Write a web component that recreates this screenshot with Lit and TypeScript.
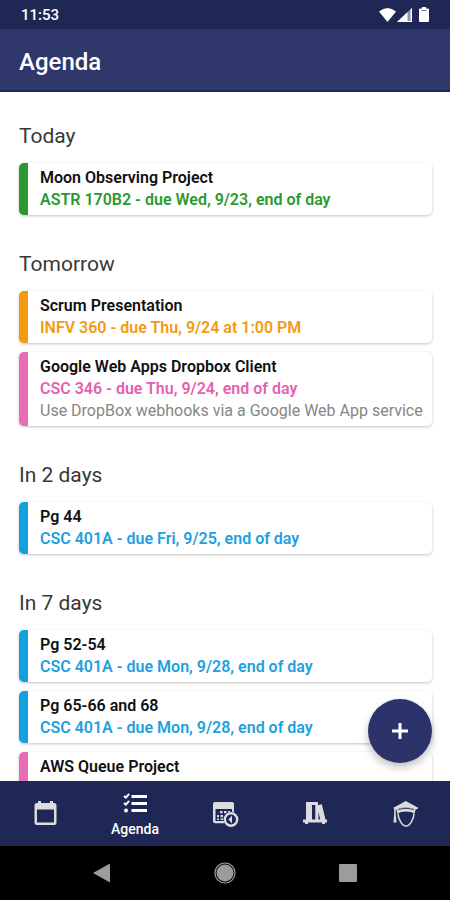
import { LitElement, html, css, svg, nothing } from "lit";
import { customElement, property, state } from "lit/decorators.js";
import { classMap } from "lit/directives/class-map.js";

interface Task {
  title: string;
  due?: string;
  note?: string;
  color: "green" | "orange" | "pink" | "blue";
}

interface Day {
  label: string;
  tasks: Task[];
}

const days: Day[] = [
  {
    label: "Today",
    tasks: [{ title: "Moon Observing Project", due: "ASTR 170B2 - due Wed, 9/23, end of day", color: "green" }],
  },
  {
    label: "Tomorrow",
    tasks: [
      { title: "Scrum Presentation", due: "INFV 360 - due Thu, 9/24 at 1:00 PM", color: "orange" },
      {
        title: "Google Web Apps Dropbox Client",
        due: "CSC 346 - due Thu, 9/24, end of day",
        note: "Use DropBox webhooks via a Google Web App service",
        color: "pink",
      },
    ],
  },
  {
    label: "In 2 days",
    tasks: [{ title: "Pg 44", due: "CSC 401A - due Fri, 9/25, end of day", color: "blue" }],
  },
  {
    label: "In 7 days",
    tasks: [
      { title: "Pg 52-54", due: "CSC 401A - due Mon, 9/28, end of day", color: "blue" },
      { title: "Pg 65-66 and 68", due: "CSC 401A - due Mon, 9/28, end of day", color: "blue" },
      { title: "AWS Queue Project", color: "pink" },
    ],
  },
];

const calendarIcon = svg`
  <path fill-rule="evenodd" d="M5 0h3v2h9V0h3v2h1a2.500 2.500 0 0 1 2.500 2.500v17A2.500 2.500 0 0 1 21 24H4a2.500 2.500 0 0 1-2.500-2.500v-17A2.500 2.500 0 0 1 4 2h1zM4 8.500v13h17v-13z"/>`;

const agendaIcon = svg`
  <path d="M8.500 4h15.500v3H8.500zM8.500 11h15.500v3H8.500zM8.500 18h15.500v3H8.500z"/>
  <circle cx="3" cy="19.500" r="2"/>
  <path d="M1 5l1.800 1.600L6.200 2.800M1 12l1.800 1.600L6.200 9.800" fill="none" stroke="currentColor" stroke-width="2"/>`;

const scheduleIcon = svg`
  <path fill-rule="evenodd" d="M2 1h17a2 2 0 0 1 2 2v8.200a7.500 7.500 0 0 0-2-.5V8H2.500v12h8.200c.2.900.6 1.600 1 2.300H2a2 2 0 0 1-2-2V3a2 2 0 0 1 2-2z"/>
  <path d="M7 10h2.500v2.300H7zM11 10h2.500v2.300H11zM15 10h2v1l-2 .600zM4 14h2v2.300H4zM7.500 14H10v2.300H7.500zM4 17.600h2v1.500H4zM7.500 17.600H10v1.500H7.500z"/>
  <circle cx="18" cy="18.500" r="6.200" fill="none" stroke="currentColor" stroke-width="2.400"/>
  <path d="M19 14.500v8l-3.500-4z"/>`;

const coursesIcon = svg`
  <path fill-rule="evenodd" d="M3 1h12v3l3.800-.800L22.500 18.500H24v3h-2V23h-3v-1.500H5V23H2v-1.500H0v-3h3zM9 4v14.500h3.300V4zM15.400 11v7.500h1.800z"/>`;

const studentIcon = svg`
  <path d="M12.800 0L25.500 7l-3 2C17.500 5.800 8.500 5.800 3.500 9L0 7z"/>
  <path d="M3.500 9C8.500 5.800 17.500 5.800 22.500 9l-1 3.800C17.500 9.800 8.500 9.800 4.500 12.800z"/>
  <path d="M5.500 8.600C9.500 7 16 7 20.500 8.600" fill="none" stroke="#1f2755" stroke-width=".9"/>
  <path d="M5 12.500c0 5.500 4.300 12.500 8 12.500s8-7 8-12.500" fill="none" stroke="currentColor" stroke-width="1.500"/>
  <path d="M1.200 7.500h1.600V14l.8 7.500H.4L1.200 14z"/>`;

const tabs = [
  { name: "Calendar", icon: calendarIcon },
  { name: "Agenda", icon: agendaIcon },
  { name: "Schedule", icon: scheduleIcon },
  { name: "Courses", icon: coursesIcon },
  { name: "Student", icon: studentIcon },
];

@customElement("task-card")
class TaskCard extends LitElement {
  @property({ attribute: false }) task!: Task;

  static styles = css`
    :host {
      display: block;
    }
    .card {
      box-sizing: border-box;
      min-height: 52px;
      padding: 4px 4px 4px 12px;
      border-left: 9px solid;
      border-radius: 5px;
      background: #fff;
      box-shadow: 0 1px 3px rgba(0, 0, 0, 0.24);
      font-size: 16px;
      line-height: 22px;
    }
    .title,
    .due,
    .note {
      margin: 0;
      white-space: nowrap;
      overflow: hidden;
    }
    .title {
      color: #111;
      font-size: 16px;
      font-weight: 600;
    }
    .due {
      font-weight: 600;
    }
    .note {
      color: #868686;
    }
    .green { border-color: #2a9a2f; }
    .green .due { color: #2a9a2f; }
    .orange { border-color: #f39a12; }
    .orange .due { color: #f39a12; }
    .pink { border-color: #e86db5; }
    .pink .due { color: #e75fb0; }
    .blue { border-color: #149fdf; }
    .blue .due { color: #1f9fe0; }
  `;

  render() {
    const { title, due, note, color } = this.task;
    return html`
      <article class="card ${color}">
        <h3 class="title">${title}</h3>
        ${due ? html`<p class="due">${due}</p>` : nothing}
        ${note ? html`<p class="note">${note}</p>` : nothing}
      </article>
    `;
  }
}

@customElement("app-root")
class AppRoot extends LitElement {
  @state() private active = "Agenda";

  static styles = css`
    :host {
      display: flex;
      flex-direction: column;
      height: 100vh;
      overflow: hidden;
      background: #fff;
      font-family: Roboto, "Liberation Sans", sans-serif;
    }
    .status {
      display: flex;
      flex: none;
      align-items: center;
      justify-content: space-between;
      height: 29px;
      padding: 0 19px 0 21px;
      background: #1f2755;
      color: #fff;
      font-size: 15px;
      font-weight: 500;
    }
    .signals {
      display: block;
      width: 52px;
      height: 16px;
      fill: #fff;
    }
    .bar {
      display: flex;
      flex: none;
      align-items: center;
      box-sizing: border-box;
      height: 63px;
      padding: 4px 19px 0;
      background: #30376b;
      border-bottom: 2px solid #1c2a5e;
      color: #fff;
    }
    .bar-title {
      margin: 0;
      font-size: 24px;
      font-weight: 500;
      line-height: 32px;
    }
    .body {
      position: relative;
      display: flex;
      flex: 1;
      min-height: 0;
    }
    .list {
      flex: 1;
      min-width: 0;
      overflow-y: auto;
      scrollbar-width: none;
      padding: 31px 18px 18px 19px;
    }
    .day + .day {
      margin-top: 36px;
    }
    .day-label {
      margin: 0 0 14px;
      color: #383838;
      font-size: 21px;
      font-weight: 400;
      line-height: 26px;
    }
    .tasks {
      display: flex;
      flex-direction: column;
      gap: 9px;
      margin: 0;
      padding: 0;
      list-style: none;
    }
    .add {
      position: absolute;
      right: 18px;
      bottom: 18px;
      display: grid;
      place-items: center;
      width: 64px;
      height: 64px;
      padding: 0;
      border: 0;
      border-radius: 50%;
      background: #2c336b;
      color: #fff;
      box-shadow: 0 4px 8px rgba(0, 0, 0, 0.26);
    }
    .plus {
      width: 16px;
      height: 16px;
      fill: currentColor;
    }
    .tabs {
      display: flex;
      flex: none;
      height: 65px;
      background: #1f2755;
    }
    .tab {
      display: flex;
      flex: 1;
      flex-direction: column;
      align-items: center;
      justify-content: center;
      gap: 4px;
      padding: 0;
      border: 0;
      background: none;
      color: #dcdce0;
      font: 500 14px/18px Roboto, "Liberation Sans", sans-serif;
    }
    .active {
      padding-top: 2px;
      color: #fff;
    }
    .icon {
      display: block;
      width: 25px;
      height: 25px;
      fill: currentColor;
      overflow: visible;
    }
    .system {
      display: flex;
      flex: none;
      align-items: center;
      justify-content: center;
      gap: 99px;
      height: 54px;
      background: #000;
    }
    .key {
      padding: 0;
      border: 0;
      background: none;
    }
    .glyph {
      display: block;
      width: 24px;
      height: 24px;
      fill: #9c9c9c;
    }
  `;

  render() {
    return html`
      <div class="status">
        <time>11:53</time>
        <svg class="signals" viewBox="0 0 52 16" aria-hidden="true">
          <path d="M0 4.500Q8.500-2.500 17 4.500L8.500 15z" />
          <path d="M18 15L33 1v14z" opacity=".5" />
          <path d="M18 15L28.500 5v10zM31.500 2.400L33 1v14h-1.500zM28 14h5v1h-5z" />
          <path d="M41 1.500h2V0h4v1.500h2a1 1 0 0 1 1 1V14a1 1 0 0 1-1 1h-8a1 1 0 0 1-1-1V2.500a1 1 0 0 1 1-1z" />
          <path d="M42.500 3.500h5" stroke="#1f2755" stroke-width=".6" />
        </svg>
      </div>
      <header class="bar"><h1 class="bar-title">Agenda</h1></header>
      <div class="body">
        <main class="list">
          ${days.map(
            (day) => html`
              <section class="day">
                <h2 class="day-label">${day.label}</h2>
                <ul class="tasks">
                  ${day.tasks.map((task) => html`<li><task-card .task=${task}></task-card></li>`)}
                </ul>
              </section>
            `,
          )}
        </main>
        <button class="add" type="button" aria-label="Add task">
          <svg class="plus" viewBox="0 0 16 16"><path d="M6.500 0h3v6.500H16v3H9.500V16h-3V9.500H0v-3h6.500z" /></svg>
        </button>
      </div>
      <nav class="tabs">
        ${tabs.map(
          (tab) => html`
            <button
              type="button"
              class=${classMap({ tab: true, active: tab.name === this.active })}
              aria-label=${tab.name}
              @click=${() => (this.active = tab.name)}
            >
              <svg class="icon" viewBox="0 0 25 25">${tab.icon}</svg>
              ${tab.name === this.active ? html`<span>${tab.name}</span>` : nothing}
            </button>
          `,
        )}
      </nav>
      <div class="system">
        <button class="key" type="button" aria-label="Back">
          <svg class="glyph" viewBox="0 0 24 24"><path d="M3 12L20 2.500v19z" /></svg>
        </button>
        <button class="key" type="button" aria-label="Home">
          <svg class="glyph" viewBox="0 0 24 24">
            <circle cx="12" cy="12" r="8.500" />
            <circle cx="12" cy="12" r="10" fill="none" stroke="#9c9c9c" stroke-width="1.200" />
          </svg>
        </button>
        <button class="key" type="button" aria-label="Recent apps">
          <svg class="glyph" viewBox="0 0 24 24"><rect x="3" y="3" width="18" height="18" rx="1" /></svg>
        </button>
      </div>
    `;
  }
}
